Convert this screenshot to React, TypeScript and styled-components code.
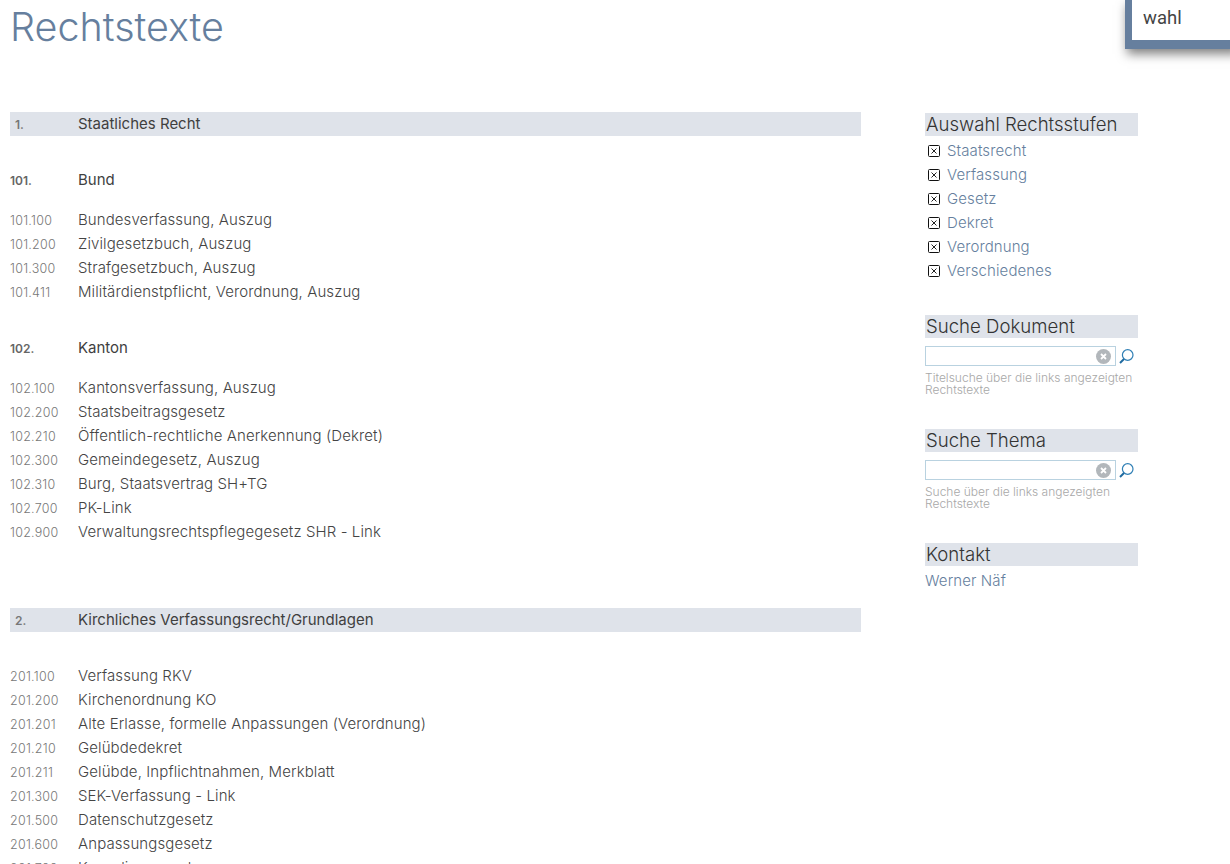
import React, { FC } from "react";
import styled, { createGlobalStyle } from "styled-components";

const GlobalStyle = createGlobalStyle`
  html, body {
    margin: 0;
    height: 864px;
    overflow: hidden;
    background: #fff;
  }
  body {
    font-family: "Inter", "Liberation Sans", sans-serif;
    color: #555;
  }
`;

const Page = styled.div`
  display: grid;
  grid-template-columns: 851px 213px;
  column-gap: 64px;
  padding: 0 0 0 10px;
`;

const Title = styled.h1`
  grid-column: 1 / -1;
  margin: 0;
  height: 112px;
  font-weight: 300;
  font-size: 39.5px;
  line-height: 55px;
  color: #667f9e;
`;

const MenuTab = styled.div`
  position: absolute;
  top: 0;
  left: 1125px;
  width: 94px;
  height: 40px;
  border-left: 7px solid #667f9e;
  border-bottom: 9px solid #667f9e;
  background: #fff;
  box-shadow: 2px 5px 10px rgba(0, 0, 0, 0.5);
  padding-left: 11px;
  font-family: "Roboto", sans-serif;
  font-size: 18.5px;
  line-height: 36px;
  color: #444;
`;

const Main = styled.main``;

const Band = styled.div`
  display: flex;
  align-items: baseline;
  height: 24px;
  background: #dfe3ea;
  font-size: 15px;
  line-height: 24px;
  color: #3f3f3f;
`;

const BandNo = styled.span`
  width: 68px;
  padding-left: 5px;
  box-sizing: border-box;
  font-size: 12px;
  font-weight: 600;
  color: #777;
`;

const Group = styled.h3`
  display: flex;
  align-items: baseline;
  height: 24px;
  margin: 32px 0 16px;
  font-size: 15px;
  font-weight: 400;
  line-height: 24px;
  color: #3f3f3f;
`;

const GroupNo = styled.span`
  width: 68px;
  font-size: 12px;
  font-weight: 600;
  color: #666;
`;

const Row = styled.div`
  display: flex;
  align-items: baseline;
  height: 24px;
  font-size: 15px;
  font-weight: 300;
  letter-spacing: 0.1px;
  line-height: 24px;
  color: #444;
`;

const RowNo = styled.span`
  width: 68px;
  font-size: 12.5px;
  letter-spacing: 0.25px;
  color: #777;
`;

const Rows = styled.div<{ $gap?: number }>`
  margin-top: ${(p) => p.$gap ?? 0}px;
`;

const Spaced = styled.div`
  margin-top: 64px;
`;

const Side = styled.aside`
  display: flex;
  flex-direction: column;
  margin-top: 1px;
`;

const SideHead = styled.h2`
  margin: 0;
  height: 23px;
  padding-left: 1px;
  background: #dfe3ea;
  font-size: 18.6px;
  font-weight: 300;
  line-height: 22px;
  color: #333;
`;

const SideBlock = styled.section`
  margin-bottom: 32px;
`;

const CheckRow = styled.label`
  display: flex;
  align-items: center;
  gap: 7px;
  height: 24px;
  padding-left: 3px;
  font-size: 15px;
  font-weight: 300;
  letter-spacing: 0.1px;
  line-height: 22px;
  color: #667f9e;
`;

const SearchRow = styled.div`
  display: flex;
  align-items: center;
  gap: 2px;
  margin-top: 8px;
`;

const SearchBox = styled.div`
  display: flex;
  align-items: center;
  justify-content: flex-end;
  box-sizing: border-box;
  width: 191px;
  height: 20px;
  padding-right: 4px;
  border: 1px solid #b9d2e0;
`;

const Hint = styled.p`
  margin: 6px 0 1px;
  font-size: 12px;
  font-weight: 300;
  line-height: 12px;
  color: #a8a8a8;
`;

const ContactLink = styled.a`
  display: block;
  margin-top: 3px;
  font-size: 15px;
  font-weight: 300;
  letter-spacing: 0.1px;
  line-height: 24px;
  color: #667f9e;
`;

const CheckBox: FC = () => (
  <svg width="12" height="12" viewBox="0 0 12 12">
    <rect x="0.5" y="0.5" width="11" height="11" rx="1" fill="#fff" stroke="#111" />
    <path d="M3.5 3.5l5 5M8.5 3.5l-5 5" stroke="#222" strokeWidth="1" />
  </svg>
);

const ClearIcon: FC = () => (
  <svg width="15" height="15" viewBox="0 0 15 15">
    <circle cx="7.5" cy="7.5" r="7.5" fill="#b2b7bb" />
    <path d="M5 5l5 5M10 5l-5 5" stroke="#fff" strokeWidth="1.8" />
  </svg>
);

const SearchIcon: FC = () => (
  <svg width="17" height="17" viewBox="0 0 17 17" fill="none">
    <circle cx="9.7" cy="7" r="5.3" stroke="#2f7fb5" strokeWidth="1.2" />
    <path d="M6 11l-4 4" stroke="#1f6aa0" strokeWidth="2" />
  </svg>
);

const bund = [
  ["101.100", "Bundesverfassung, Auszug"],
  ["101.200", "Zivilgesetzbuch, Auszug"],
  ["101.300", "Strafgesetzbuch, Auszug"],
  ["101.411", "Militärdienstpflicht, Verordnung, Auszug"],
];

const kanton = [
  ["102.100", "Kantonsverfassung, Auszug"],
  ["102.200", "Staatsbeitragsgesetz"],
  ["102.210", "Öffentlich-rechtliche Anerkennung (Dekret)"],
  ["102.300", "Gemeindegesetz, Auszug"],
  ["102.310", "Burg, Staatsvertrag SH+TG"],
  ["102.700", "PK-Link"],
  ["102.900", "Verwaltungsrechtspflegegesetz SHR - Link"],
];

const kirche = [
  ["201.100", "Verfassung RKV"],
  ["201.200", "Kirchenordnung KO"],
  ["201.201", "Alte Erlasse, formelle Anpassungen (Verordnung)"],
  ["201.210", "Gelübdedekret"],
  ["201.211", "Gelübde, Inpflichtnahmen, Merkblatt"],
  ["201.300", "SEK-Verfassung - Link"],
  ["201.500", "Datenschutzgesetz"],
  ["201.600", "Anpassungsgesetz"],
  ["201.700", "Kasualienverordnung"],
];

const stufen = ["Staatsrecht", "Verfassung", "Gesetz", "Dekret", "Verordnung", "Verschiedenes"];

const List: FC<{ items: string[][] }> = ({ items }) => (
  <>
    {items.map(([no, text]) => (
      <Row key={no}>
        <RowNo>{no}</RowNo>
        {text}
      </Row>
    ))}
  </>
);

const Search: FC<{ title: string; hint: string }> = ({ title, hint }) => (
  <SideBlock>
    <SideHead>{title}</SideHead>
    <SearchRow>
      <SearchBox>
        <ClearIcon />
      </SearchBox>
      <SearchIcon />
    </SearchRow>
    <Hint>{hint}</Hint>
  </SideBlock>
);

const App: FC = () => (
  <>
    <GlobalStyle />
    <MenuTab>wahl</MenuTab>
    <Page>
      <Title>Rechtstexte</Title>
      <Main>
        <Band>
          <BandNo>1.</BandNo>
          Staatliches Recht
        </Band>
        <Group>
          <GroupNo>101.</GroupNo>
          Bund
        </Group>
        <List items={bund} />
        <Group>
          <GroupNo>102.</GroupNo>
          Kanton
        </Group>
        <List items={kanton} />
        <Spaced>
          <Band>
            <BandNo>2.</BandNo>
            Kirchliches Verfassungsrecht/Grundlagen
          </Band>
        </Spaced>
        <Rows $gap={32}>
          <List items={kirche} />
        </Rows>
      </Main>
      <Side>
        <SideBlock>
          <SideHead>Auswahl Rechtsstufen</SideHead>
          <Rows $gap={3}>
            {stufen.map((s) => (
              <CheckRow key={s}>
                <CheckBox />
                {s}
              </CheckRow>
            ))}
          </Rows>
        </SideBlock>
        <Search title="Suche Dokument" hint="Titelsuche über die links angezeigten Rechtstexte" />
        <Search title="Suche Thema" hint="Suche über die links angezeigten Rechtstexte" />
        <SideBlock>
          <SideHead>Kontakt</SideHead>
          <ContactLink>Werner Näf</ContactLink>
        </SideBlock>
      </Side>
    </Page>
  </>
);

export default App;
